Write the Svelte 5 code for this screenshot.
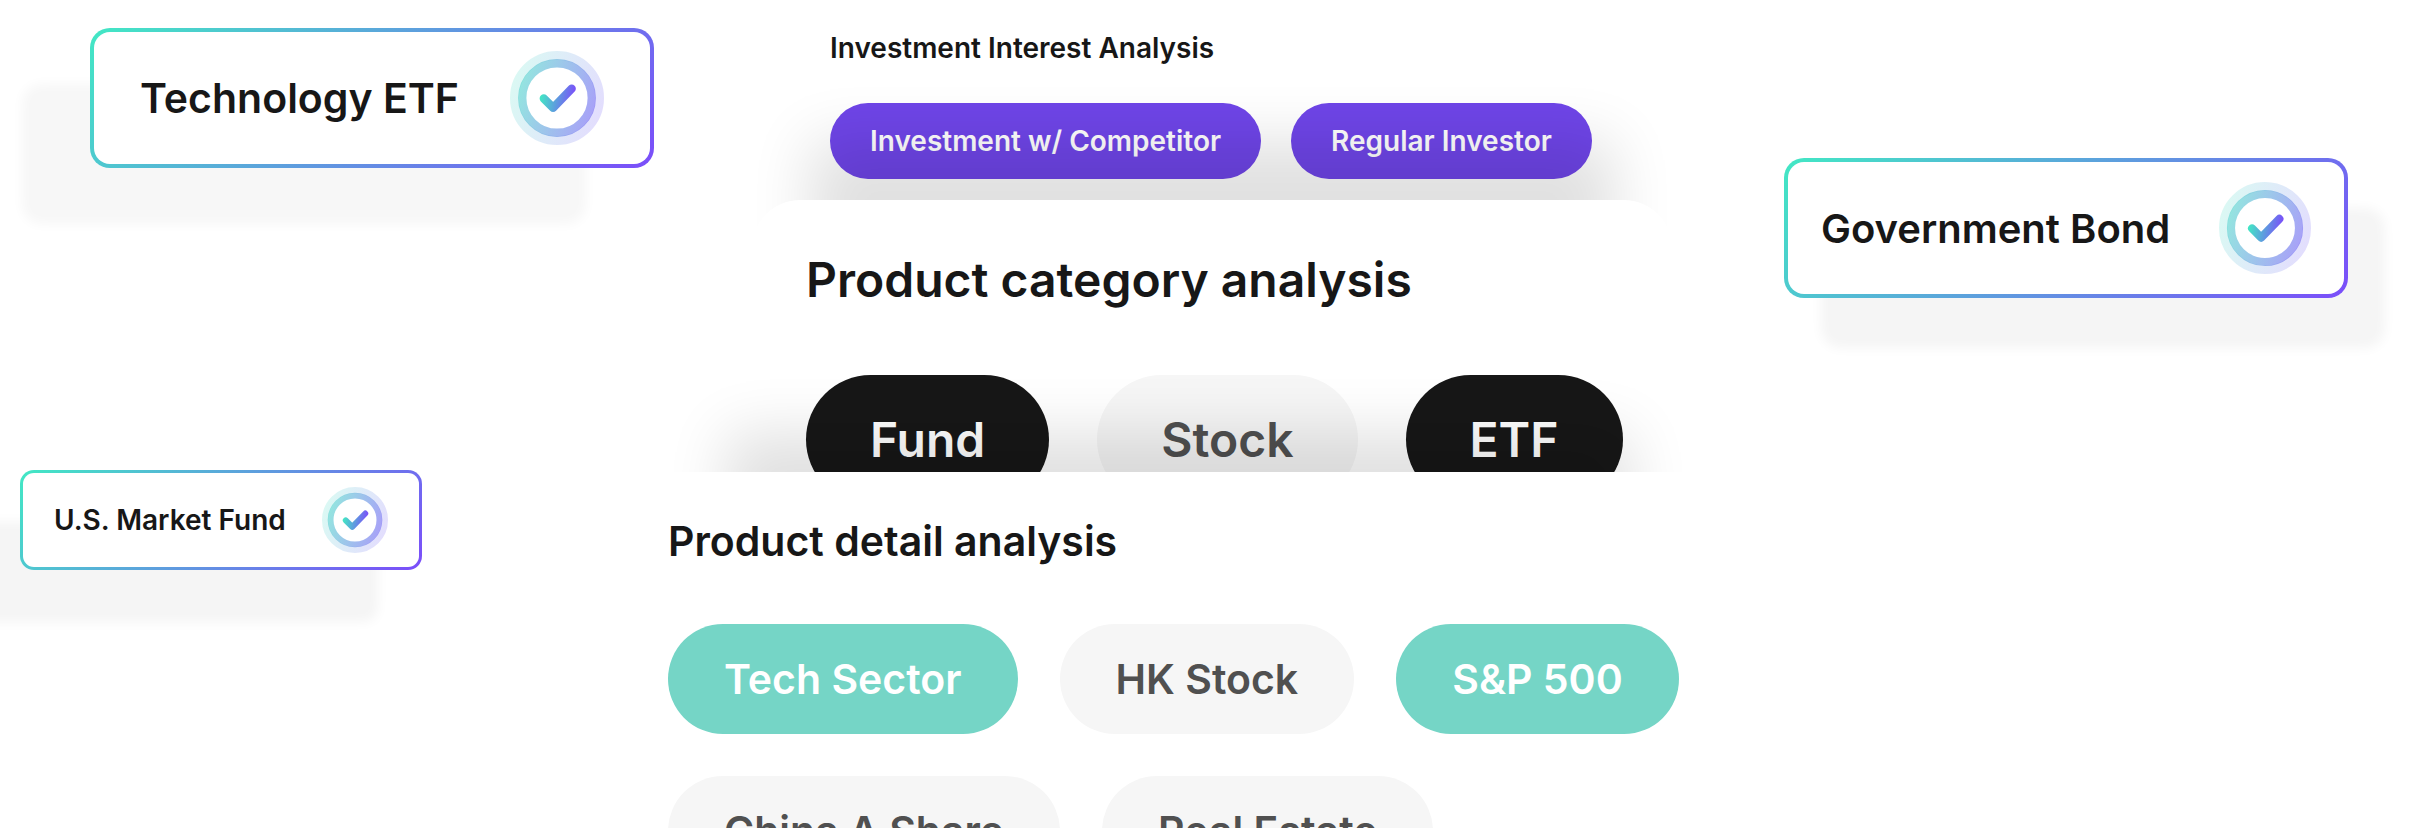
<script lang="ts">
  type Card = { id: string; label: string };
  type Chip = { label: string; selected: boolean };

  const leftCards: Card[] = [
    { id: "technology", label: "Technology ETF" },
    { id: "market", label: "U.S. Market Fund" },
  ];

  const rightCards: Card[] = [{ id: "government", label: "Government Bond" }];

  let panels: { id: string; title: string; chips: Chip[] }[] = $state([
    {
      id: "interest",
      title: "Investment Interest Analysis",
      chips: [
        { label: "Investment w/ Competitor", selected: true },
        { label: "Regular Investor", selected: true },
      ],
    },
    {
      id: "category",
      title: "Product category analysis",
      chips: [
        { label: "Fund", selected: true },
        { label: "Stock", selected: false },
        { label: "ETF", selected: true },
      ],
    },
    {
      id: "detail",
      title: "Product detail analysis",
      chips: [
        { label: "Tech Sector", selected: true },
        { label: "HK Stock", selected: false },
        { label: "S&P 500", selected: true },
        { label: "China A Share", selected: false },
        { label: "Real Estate", selected: false },
      ],
    },
  ]);
</script>

{#snippet productCard(card: Card)}
  <article class="card {card.id}">
    <span>{card.label}</span>
    <svg class="badge" viewBox="0 0 96 96" aria-hidden="true">
      <defs>
        <linearGradient id="ring-{card.id}" gradientUnits="userSpaceOnUse" x1="4" y1="34" x2="92" y2="62">
          <stop offset="0" stop-color="#4adbc8" />
          <stop offset="1" stop-color="#705bf5" />
        </linearGradient>
        <linearGradient id="tick-{card.id}" gradientUnits="userSpaceOnUse" x1="31" y1="44" x2="66" y2="50">
          <stop offset="0" stop-color="#42e8c4" />
          <stop offset="1" stop-color="#7b4dfa" />
        </linearGradient>
      </defs>
      <circle cx="48" cy="48" r="43.5" fill="none" stroke="url(#ring-{card.id})" stroke-width="9" opacity="0.2" />
      <circle cx="48" cy="48" r="35.5" fill="none" stroke="url(#ring-{card.id})" stroke-width="8.5" opacity="0.6" />
      <path
        d="M34.5 48.5 L44 58 L63 38.5"
        fill="none"
        stroke="url(#tick-{card.id})"
        stroke-width="8.5"
        stroke-linecap="round"
        stroke-linejoin="round"
      />
    </svg>
  </article>
{/snippet}

<main class="scene">
  <div class="side left">
    {#each leftCards as card (card.id)}
      {@render productCard(card)}
    {/each}
  </div>

  <div class="stack">
    {#each panels as panel (panel.id)}
      <section class="panel {panel.id}">
        <h2>{panel.title}</h2>
        <div class="chips">
          {#each panel.chips as chip (chip.label)}
            <button
              type="button"
              class="chip"
              class:selected={chip.selected}
              aria-pressed={chip.selected}
              onclick={() => (chip.selected = !chip.selected)}
            >
              {chip.label}
            </button>
          {/each}
        </div>
      </section>
    {/each}
  </div>

  <div class="side right">
    {#each rightCards as card (card.id)}
      {@render productCard(card)}
    {/each}
  </div>
</main>

<style>
  :global(body) {
    margin: 0;
    background: #fff;
  }

  .scene {
    display: grid;
    grid-template-columns: minmax(0, 8fr) minmax(0, 15fr) minmax(0, 9fr);
    height: 100vh;
    overflow: hidden;
    font-family: Inter, "Liberation Sans", sans-serif;
    font-weight: 600;
    color: #171717;
  }

  .side {
    display: flex;
    flex-direction: column;
  }

  .left {
    align-items: flex-start;
    gap: 302px;
    padding: 28px 0 0 20px;
  }

  .right {
    align-items: flex-end;
    padding: 158px 84px 0 0;
  }

  /* white face with a gradient stroke painted under the border */
  .card {
    display: flex;
    align-items: center;
    justify-content: space-between;
    box-sizing: border-box;
    width: 564px;
    height: 140px;
    border: 4px solid transparent;
    border-radius: 20px;
    background:
      linear-gradient(#fff, #fff) padding-box,
      linear-gradient(135deg, #42e8c4, #7b4dfa) border-box;
    font-size: 41px;
    white-space: nowrap;
  }

  .badge {
    flex: none;
    width: 94px;
    height: 94px;
  }

  .technology {
    margin-left: 70px;
    padding: 0 46px;
    box-shadow: -68px 56px 12px #f7f7f7;
  }

  .market {
    width: 402px;
    height: 100px;
    padding: 0 31px;
    border-width: 3px;
    border-radius: 14px;
    font-size: 28px;
    box-shadow: -44px 52px 12px #f5f5f5;
  }

  .market .badge {
    width: 66px;
    height: 66px;
  }

  .government {
    padding: 0 33px;
    font-size: 40px;
    box-shadow: 37px 50px 12px #f5f5f5;
  }

  .government .badge {
    width: 92px;
    height: 92px;
  }

  .panel {
    position: relative;
    background: #fff;
  }

  h2 {
    margin: 0;
    font-weight: 600;
  }

  .chips {
    display: flex;
    flex-wrap: wrap;
  }

  .chip {
    border: 0;
    border-radius: 999px;
    background: #f6f6f6;
    color: #505050;
    font: inherit;
    white-space: nowrap;
    cursor: pointer;
  }

  .chip.selected {
    color: #fff;
  }

  .interest {
    margin: 0 76px 0 144px;
    padding: 31px 60px 21px 78px;
    font-size: 28px;
  }

  .interest h2 {
    margin-bottom: 38px;
    font-size: 28px;
    line-height: 34px;
  }

  .interest .chips {
    gap: 30px;
  }

  .interest .chip {
    height: 76px;
    padding: 0 40px;
  }

  .interest .selected {
    background: #6f45e8;
  }

  .category {
    margin: 0 76px 0 144px;
    padding: 51px 40px 54px 54px;
    border-radius: 48px;
    font-size: 48px;
    box-shadow: 0 -118px 56px -58px rgba(0, 0, 0, 0.12);
  }

  .category h2 {
    margin-bottom: 66px;
    font-size: 48px;
    line-height: 58px;
  }

  .category .chips {
    gap: 48px;
  }

  .category .chip {
    height: 129px;
    padding: 0 64px;
  }

  .category .selected {
    background: #171717;
  }

  .detail {
    margin-top: -86px;
    padding: 44px 60px;
    font-size: 41px;
    box-shadow: 0 -158px 56px -118px rgba(0, 0, 0, 0.12);
  }

  .detail h2 {
    margin-bottom: 58px;
    font-size: 41px;
    line-height: 50px;
  }

  .detail .chips {
    gap: 42px;
  }

  .detail .chip {
    height: 110px;
    padding: 0 56px;
  }

  .detail .selected {
    background: #75d5c6;
  }
</style>
